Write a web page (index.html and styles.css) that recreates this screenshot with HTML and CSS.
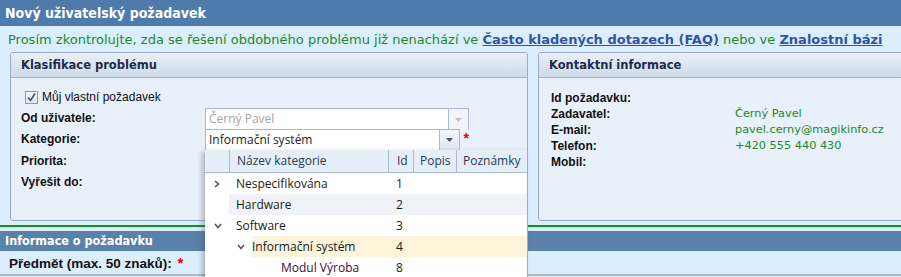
FILE: index.html
```html
<!DOCTYPE html>
<html lang="cs">
<head>
<meta charset="utf-8">
<link rel="stylesheet" href="styles.css">
</head>
<body>
<div class="page">
  <div class="titlebar">Nový uživatelský požadavek</div>
  <div class="notice">Prosím zkontrolujte, zda se řešení obdobného problému již nenachází ve <a href="#">Často kladených dotazech (FAQ)</a> nebo ve <a href="#">Znalostní bázi</a></div>
  <div class="panels">
    <div class="panel panel-left">
      <div class="panel-head">Klasifikace problému</div>
      <div class="panel-body">
        <label class="check"><span class="box"><svg width="11" height="11" viewBox="0 0 11 11"><path d="M2 5.5 L4.5 8.5 L9 1.5" fill="none" stroke="#3b4f8a" stroke-width="1.6"/></svg></span>Můj vlastní požadavek</label>
        <div class="form">
          <div class="lbl">Od uživatele:</div>
          <div class="combo disabled"><span class="ctext">Černý Pavel</span><span class="cbtn"><svg width="7" height="4" viewBox="0 0 7 4"><path d="M0 0H7L3.5 4Z" fill="#b8c0cc"/></svg></span></div>
          <div class="lbl">Kategorie:</div>
          <div class="combo-wrap">
            <div class="combo"><span class="ctext">Informační systém</span><span class="cbtn"><svg width="7" height="4" viewBox="0 0 7 4"><path d="M0 0H7L3.5 4Z" fill="#4a5568"/></svg></span></div>
            <span class="req">*</span>
          </div>
          <div class="lbl">Priorita:</div>
          <div></div>
          <div class="lbl">Vyřešit do:</div>
          <div></div>
        </div>
        <div class="popup">
          <div class="grow ghead">
            <div class="c0"></div>
            <div class="c1">Název kategorie</div>
            <div class="c2">Id</div>
            <div class="c3">Popis</div>
            <div class="c4">Poznámky</div>
          </div>
          <div class="grow">
            <div class="c0"><svg class="chev" width="6" height="8" viewBox="0 0 6 8"><path d="M1 1L4.5 4L1 7" fill="none" stroke="#555" stroke-width="1.6"/></svg></div>
            <div class="c1">Nespecifikována</div><div class="c2">1</div><div class="c3"></div><div class="c4"></div>
          </div>
          <div class="grow alt">
            <div class="c0"></div>
            <div class="c1">Hardware</div><div class="c2">2</div><div class="c3"></div><div class="c4"></div>
          </div>
          <div class="grow">
            <div class="c0"><svg class="chev" width="8" height="6" viewBox="0 0 8 6"><path d="M1 1L4 4.5L7 1" fill="none" stroke="#555" stroke-width="1.6"/></svg></div>
            <div class="c1">Software</div><div class="c2">3</div><div class="c3"></div><div class="c4"></div>
          </div>
          <div class="grow sub">
            <div class="c0"></div>
            <div class="c1 hl"><span class="ind"><svg width="8" height="6" viewBox="0 0 8 6"><path d="M1 1L4 4.5L7 1" fill="none" stroke="#555" stroke-width="1.6"/></svg></span><span class="hlt">Informační systém</span></div><div class="c2 hlc">4</div><div class="c3 hlc"></div><div class="c4 hlc"></div>
          </div>
          <div class="grow sub2">
            <div class="c0"></div>
            <div class="c1"><span class="ind2"></span>Modul Výroba</div><div class="c2">8</div><div class="c3"></div><div class="c4"></div>
          </div>
        </div>
      </div>
    </div>
    <div class="panel panel-right">
      <div class="panel-head">Kontaktní informace</div>
      <div class="panel-body">
        <div class="info">
          <div class="lbl">Id požadavku:</div><div class="val"></div>
          <div class="lbl">Zadavatel:</div><div class="val">Černý Pavel</div>
          <div class="lbl">E-mail:</div><div class="val">pavel.cerny@magikinfo.cz</div>
          <div class="lbl">Telefon:</div><div class="val">+420 555 440 430</div>
          <div class="lbl">Mobil:</div><div class="val"></div>
        </div>
      </div>
    </div>
  </div>
  <div class="divider"></div>
  <div class="subbar">Informace o požadavku</div>
  <div class="subject">Předmět (max. 50 znaků): <span class="req">*</span></div>
</div>
</body>
</html>
```
FILE: styles.css
```css
html, body {
  margin: 0;
  padding: 0;
  background: #dbeefe;
  overflow: hidden;
}
.page {
  width: 901px;
  height: 277px;
  position: relative;
  overflow: hidden;
  background: #dbeefe;
  font-family: "DejaVu Sans", Verdana, sans-serif;
}
.titlebar {
  height: 26px;
  background: #4e7bab;
  color: #fff;
  font-family: "DejaVu Sans Condensed", "DejaVu Sans", sans-serif;
  font-weight: bold;
  font-size: 14px;
  line-height: 26px;
  padding-left: 5px;
}
.notice {
  height: 26px;
  line-height: 28px;
  padding-left: 8px;
  font-size: 13px;
  color: #1d8a1d;
  white-space: nowrap;
}
.notice a {
  color: #33549e;
  font-weight: bold;
  text-decoration: underline;
}
.panels {
  display: flex;
  gap: 10px;
  padding-left: 10px;
  width: 1200px;
}
.panel {
  width: 516px;
  height: 167px;
  border: 1px solid #98adca;
  border-radius: 3px;
  background: #e8f0fa;
  flex: none;
  position: relative;
}
.panel-right { width: 520px; }
.panel-head {
  height: 24px;
  border-bottom: 1px solid #9fb2cc;
  background: linear-gradient(#e9eff7, #cfdbe9);
  color: #1e2c4c;
  font-weight: bold;
  font-size: 11.5px;
  line-height: 25px;
  padding-left: 10px;
  border-radius: 3px 3px 0 0;
}
.panel-body {
  position: relative;
  padding-top: 12px;
}
.check {
  display: flex;
  align-items: center;
  margin: 0 0 0 14px;
  height: 14px;
  font-family: "Liberation Sans", Arial, sans-serif;
  font-size: 12px;
  color: #111;
}
.box {
  width: 11px;
  height: 11px;
  border: 1px solid #8e98a8;
  background: linear-gradient(#f4f6f9, #dfe4ea);
  margin-right: 4px;
  display: flex;
}
.form {
  display: grid;
  grid-template-columns: 184px 264px;
  grid-template-rows: 21px 22px 21px 22px;
  margin: 4px 0 0 10px;
}
.lbl {
  font-family: "Liberation Sans", Arial, sans-serif;
  font-weight: bold;
  font-size: 12px;
  color: #111;
  line-height: 21px;
}
.combo {
  height: 20px;
  width: 262px;
  border: 1px solid #a8b8cf;
  background: #fff;
  display: flex;
  font-family: "Open Sans", sans-serif;
  font-size: 12px;
  color: #222;
}
.combo.disabled { color: #a6a6a6; border-bottom: none; height: 21px; }
.ctext { flex: 1; line-height: 20px; padding-left: 3px; }
.cbtn {
  width: 19px;
  border-left: 1px solid #a8b8cf;
  background: linear-gradient(#f3f6fa, #dde5ef);
  display: flex;
  align-items: center;
  justify-content: center;
}
.disabled .cbtn { background: #f1f4f8; }
.combo-wrap { display: flex; position: relative; }
.req {
  color: #e00000;
  font-family: "Liberation Sans", Arial, sans-serif;
  font-weight: bold;
  font-size: 14px;
  margin-left: 4px;
  line-height: 18px;
}
.popup {
  position: absolute;
  left: 194px;
  top: 72px;
  width: 322px;
  height: 140px;
  background: #fff;
  border-right: 1px solid #98adca;
  box-shadow: -3px 2px 5px rgba(60, 70, 90, 0.35);
  z-index: 5;
  font-family: "Open Sans", sans-serif;
  font-size: 12px;
  color: #1a1a1a;
}
.grow {
  display: flex;
  height: 21px;
  line-height: 21px;
}
.ghead {
  height: 22px;
  line-height: 22px;
  background: #e5edf7;
  border-bottom: 1px solid #a9bad1;
  color: #2b3a55;
}
.ghead > div { border-left: 1px solid #a9bad1; }
.ghead > .c0 { border-left: none; }
.c0 { width: 24px; flex: none; display: flex; align-items: center; padding-left: 9px; box-sizing: border-box; }
.c1 { width: 159px; flex: none; padding-left: 7px; box-sizing: border-box; display: flex; align-items: center; }
.c2 { width: 25px; flex: none; padding-left: 8px; box-sizing: border-box; }
.c3 { width: 43px; flex: none; padding-left: 6px; box-sizing: border-box; }
.c4 { flex: 1; padding-left: 6px; }
.alt .c1, .alt .c2, .alt .c3, .alt .c4 { background: #f0f2f8; }
.sub .c1 { padding-left: 0; }
.ind { width: 23px; display: flex; align-items: center; padding-left: 8px; box-sizing: border-box; height: 21px; background: #fff; }
.hlt { flex: 1; background: #fbf4da; padding-left: 0; height: 21px; }
.hlc { background: #fbf4da; }
.sub2 .c1 { color: #3b0d3b; }
.ind2 { width: 45px; flex: none; }
.sub2 .c1 { padding-left: 7px; }
.info {
  display: grid;
  grid-template-columns: 184px 1fr;
  grid-auto-rows: 16px;
  margin: 0 0 0 12px;
}
.info .lbl { line-height: 16px; }
.val {
  color: #23882a;
  font-family: "DejaVu Sans", Verdana, sans-serif;
  font-size: 11.3px;
  line-height: 16px;
}
.divider {
  margin-top: 4px;
  height: 2px;
  background: #16901a;
}
.subbar {
  margin-top: 4px;
  height: 20px;
  background: #5a82a8;
  color: #fff;
  font-family: "DejaVu Sans Condensed", "DejaVu Sans", sans-serif;
  font-weight: bold;
  font-size: 12.5px;
  line-height: 20px;
  padding-left: 5px;
}
.subject {
  height: 23px;
  border-bottom: 2px solid #b3b8bf;
  font-family: "Liberation Sans", Arial, sans-serif;
  font-weight: bold;
  font-size: 13.5px;
  line-height: 26px;
  padding-left: 9px;
  color: #111;
}
.subject .req { margin-left: 2px; font-size: 15px; }
```
